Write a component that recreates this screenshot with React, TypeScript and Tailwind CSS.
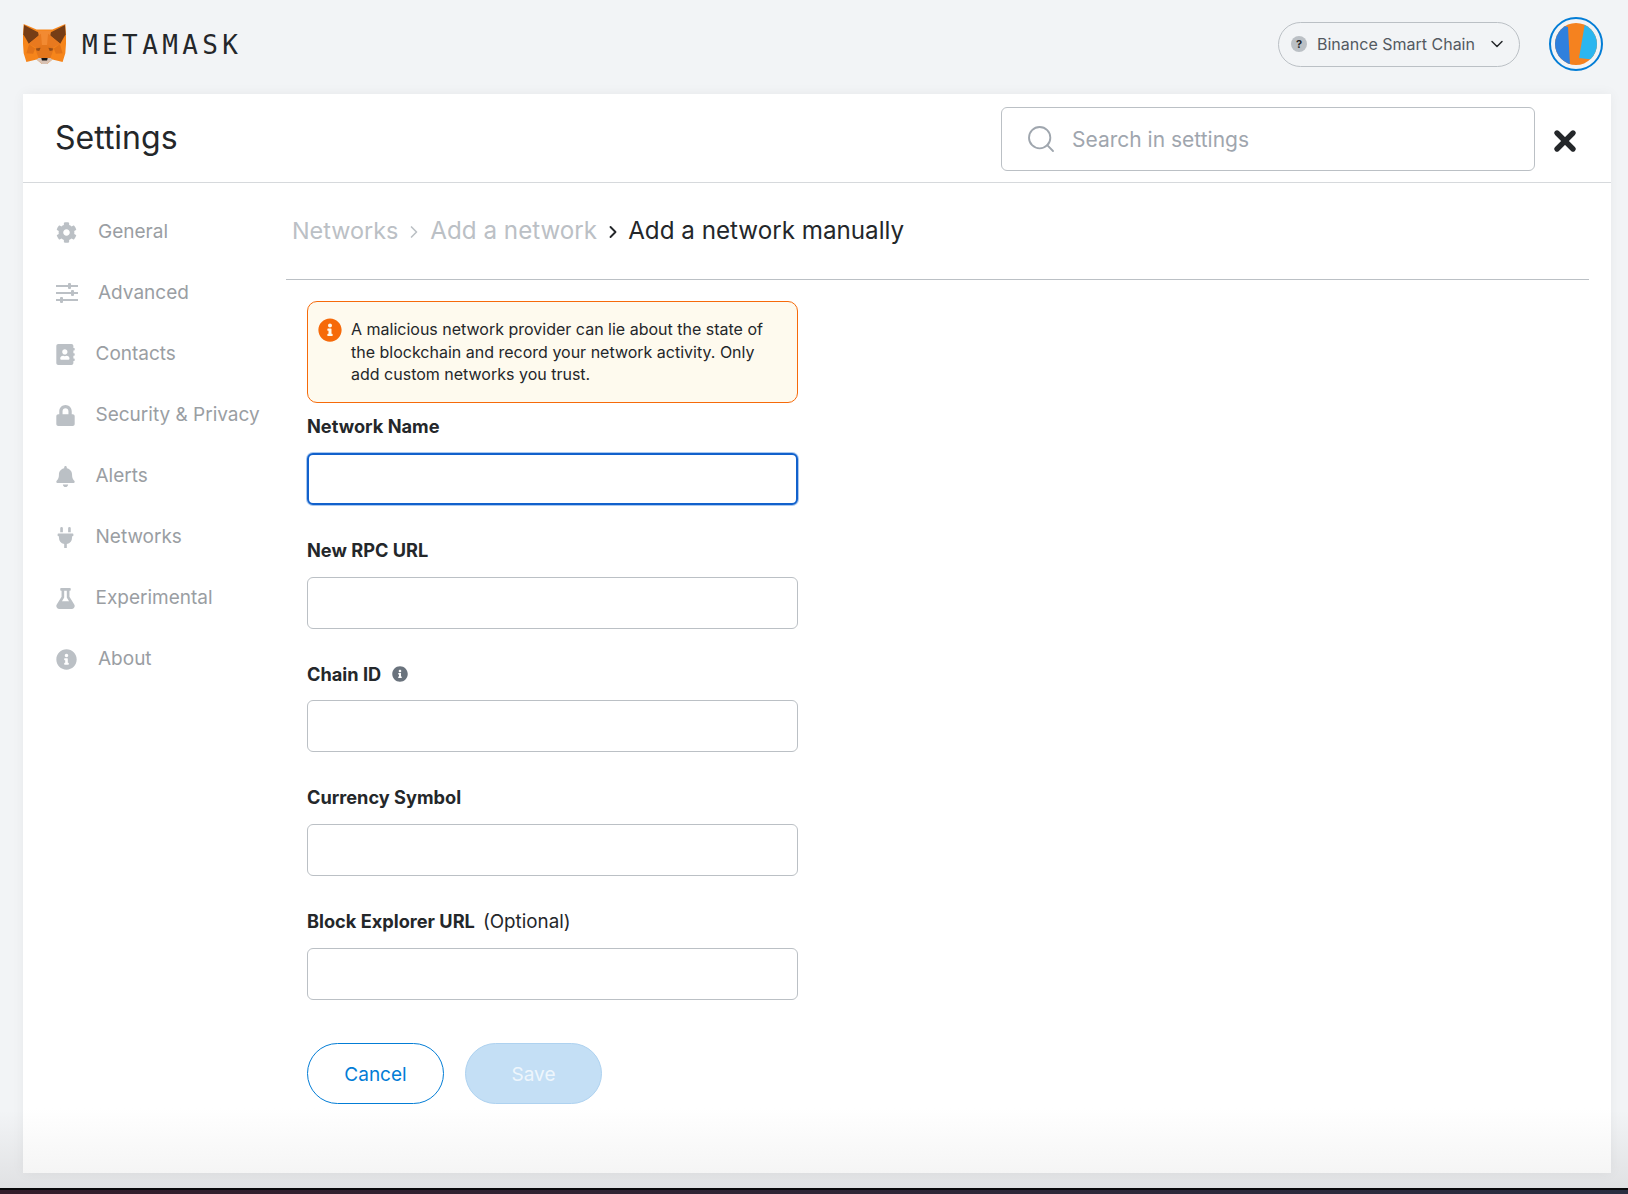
import { FaAddressBook, FaBell, FaCog, FaFlask, FaInfoCircle, FaLock, FaPlug } from 'react-icons/fa';
import { ChevronDown, ChevronRight, Search, X } from 'lucide-react';

const FoxLogo = () => (
  <svg viewBox="0 0 127 118" className="w-[43px] h-[40px] shrink-0">
    <polygon points="2,0 40,16 87,16 125,0 127,32 127,58 125,86 117,112 87,105 71,118 56,118 40,105 10,112 2,86 0,58 0,32" fill="#f6851b" />
    <polygon points="3,3 53,29 17,58 1,30" fill="#763d16" />
    <polygon points="124,3 74,29 110,58 126,30" fill="#763d16" />
    <polygon points="44,20 83,20 76,62 51,62" fill="#f28a32" />
    <polygon points="53,29 17,58 42,72 56,62" fill="#e8791f" />
    <polygon points="74,29 110,58 85,72 71,62" fill="#e8791f" />
    <polygon points="36,72 56,62 71,62 91,72 81,100 46,100" fill="#e4761b" />
    <polygon points="46,100 40,105 56,118 71,118 87,105 81,100" fill="#d7c1b3" />
    <polygon points="54,100 73,100 71,108 56,108" fill="#161616" />
    <polygon points="38,72 52,70 48,80 40,78" fill="#763d16" opacity="0.7" />
    <polygon points="89,72 75,70 79,80 87,78" fill="#763d16" opacity="0.7" />
    <polygon points="18,60 36,72 30,88 10,86" fill="#cd6116" opacity="0.5" />
    <polygon points="109,60 91,72 97,88 117,86" fill="#cd6116" opacity="0.5" />
  </svg>
);

const SlidersIcon = () => (
  <svg viewBox="0 0 22 20" className="w-[22px] h-[20px]" fill="#bbc0c5">
    <rect x="0" y="2" width="22" height="2" />
    <rect x="0" y="9" width="22" height="2" />
    <rect x="0" y="16" width="22" height="2" />
    <rect x="12" y="0" width="3" height="6" rx="1" />
    <rect x="15" y="7" width="3" height="6" rx="1" />
    <rect x="4" y="14" width="3" height="6" rx="1" />
  </svg>
);

const navItems = [
  { label: 'General', icon: <FaCog className="w-[21px] h-[21px]" />, wide: true },
  { label: 'Advanced', icon: <SlidersIcon />, wide: true },
  { label: 'Contacts', icon: <FaAddressBook className="w-[19px] h-[21px]" />, wide: false },
  { label: 'Security & Privacy', icon: <FaLock className="w-[19px] h-[21px]" />, wide: false },
  { label: 'Alerts', icon: <FaBell className="w-[19px] h-[21px]" />, wide: false },
  { label: 'Networks', icon: <FaPlug className="w-[19px] h-[21px]" />, wide: false },
  { label: 'Experimental', icon: <FaFlask className="w-[19px] h-[21px]" />, wide: false },
  { label: 'About', icon: <FaInfoCircle className="w-[21px] h-[21px]" />, wide: true },
];

const Field = ({ label, extra, focused = false }: { label: string; extra?: React.ReactNode; focused?: boolean }) => (
  <div className="flex flex-col gap-[15px]">
    <div className="h-6 pt-[2px] flex items-center text-[18.2px] font-bold text-[#24272a]">
      {label}
      {extra}
    </div>
    <input
      className={
        focused
          ? 'h-[52px] w-[491px] rounded-[6px] border-2 border-[#1161cc] ring-1 ring-[#a9c8ef] bg-white outline-none'
          : 'h-[52px] w-[491px] rounded-[6px] border border-[#bbc0c5] bg-white outline-none'
      }
    />
  </div>
);

export default function App() {
  return (
    <div className="h-screen flex flex-col overflow-hidden font-[Inter,sans-serif] bg-[linear-gradient(to_bottom,#f2f4f6_93%,#dfe0e2_100%)]">
      {/* App header */}
      <header className="h-[94px] shrink-0 flex items-center justify-between pl-[23px] pr-[25px] pb-[6px]">
        <div className="flex items-center gap-[16px]">
          <FoxLogo />
          <span className="pt-[2px] font-['DejaVu_Sans_Mono',monospace] text-[26px] tracking-[4.4px] text-[#24272a]">METAMASK</span>
        </div>
        <div className="flex items-center gap-[29px]">
          <div className="w-[242px] h-[45px] rounded-full border border-[#bbc0c5] flex items-center pl-[12px] pr-[12px] text-[#535a61]">
            <span className="w-4 h-4 rounded-full bg-[#bbc0c5] text-[#24272a] text-[11px] font-bold flex items-center justify-center">?</span>
            <span className="ml-[10px] text-[16px] whitespace-nowrap flex-1">Binance Smart Chain</span>
            <ChevronDown className="w-5 h-5 text-[#24272a]" strokeWidth={1.75} />
          </div>
          <div className="w-[54px] h-[54px] rounded-full border-2 border-[#037dd6] p-1 flex items-center justify-center">
            <svg viewBox="0 0 42 42" className="w-[42px] h-[42px] rounded-full">
              <rect width="42" height="42" fill="#f5821f" />
              <polygon points="0,0 13,4 15,42 0,42" fill="#2f80dd" />
              <polygon points="30,0 42,0 42,37 24,35" fill="#2bb6ef" />
            </svg>
          </div>
        </div>
      </header>

      {/* Settings card */}
      <main className="mr-[17px] ml-[23px] flex-1 flex flex-col min-h-0 shadow-[0_0_12px_rgba(0,0,0,0.05)] bg-[linear-gradient(to_bottom,#ffffff_94%,#f5f5f5_100%)]">
        <div className="h-[89px] shrink-0 border-b border-[#d6d9dc] flex items-center pl-[32px] pr-[30px]">
          <h1 className="text-[32px] text-[#24272a] flex-1">Settings</h1>
          <div className="w-[534px] h-[64px] mt-[2px] rounded-[6px] border border-[#bbc0c5] flex items-center pl-[23px] gap-[15px]">
            <Search className="w-[32px] h-[32px] text-[#9fa6ae]" strokeWidth={1.4} />
            <span className="mt-[2px] text-[21px] text-[#9fa6ae]">Search in settings</span>
          </div>
          <X className="w-8 h-8 ml-[14px] mt-[6px] text-[#24272a]" strokeWidth={4} />
        </div>

        <div className="flex flex-1 min-h-0">
          <nav className="w-[263px] shrink-0 pt-[18.5px] pl-[33px]">
            {navItems.map((item) => (
              <div key={item.label} className="h-[61px] flex items-center text-[#9a9ea3] text-[19px]">
                <span className={item.wide ? 'w-[42px] text-[#bbc0c5] flex' : 'w-[39.5px] text-[#bbc0c5] flex'}>{item.icon}</span>
                <span className="whitespace-nowrap">{item.label}</span>
              </div>
            ))}
          </nav>

          <section className="flex-1 pr-[22px]">
            <div className="h-[97px] border-b border-[#bbc0c5] flex items-start pt-[32px] pl-[6px] text-[24.2px] leading-8">
              <span className="text-[23.4px] text-[#bbc0c5]">Networks</span>
              <ChevronRight className="w-5 h-5 mx-[6px] mt-[7px] text-[#bbc0c5]" strokeWidth={2} />
              <span className="text-[#bbc0c5]">Add a network</span>
              <ChevronRight className="w-5 h-5 mx-[5.5px] mt-[7px] text-[#24272a]" strokeWidth={2.25} />
              <span className="text-[#24272a]">Add a network manually</span>
            </div>

            <div className="pl-[21px] pt-[21px]">
              <div className="w-[491px] h-[102px] rounded-[10px] border border-[#f66a0a] bg-[#fefaee] flex pl-[10px] pt-[16px] text-[#24272a] text-[16px] leading-[22.7px]">
                <FaInfoCircle className="w-[24px] h-[24px] text-[#f66a0a] shrink-0" />
                <p className="ml-[9px] w-[425px]">
                  A malicious network provider can lie about the state of the blockchain and record your network activity. Only add custom networks you trust.
                </p>
              </div>

              <div className="mt-[11px] flex flex-col gap-[32.7px]">
                <Field label="Network Name" focused />
                <Field label="New RPC URL" />
                <Field label="Chain ID" extra={<FaInfoCircle className="ml-[11px] w-4 h-4 text-[#6a737d]" />} />
                <Field label="Currency Symbol" />
                <Field
                  label="Block Explorer URL"
                  extra={<span className="ml-2 text-[18.8px] font-normal">(Optional)</span>}
                />
              </div>

              <div className="mt-[43.5px] flex gap-[21px]">
                <button className="w-[137px] h-[61px] pt-[2px] rounded-full border border-[#037dd6] text-[#037dd6] text-[19px]">Cancel</button>
                <button className="w-[137px] h-[61px] pt-[2px] rounded-full border border-[#aed2f0] bg-[#c4dff5] text-[#eef6fc] text-[19px]">Save</button>
              </div>
            </div>
          </section>
        </div>
      </main>

      {/* Strip of the desktop under the window */}
      <div className="h-[15px] shrink-0" />
      <div className="h-[6px] shrink-0 border-t-2 border-[#0a0a0c] bg-[linear-gradient(to_right,#321c2a,#2a2d40)]" />
    </div>
  );
}
